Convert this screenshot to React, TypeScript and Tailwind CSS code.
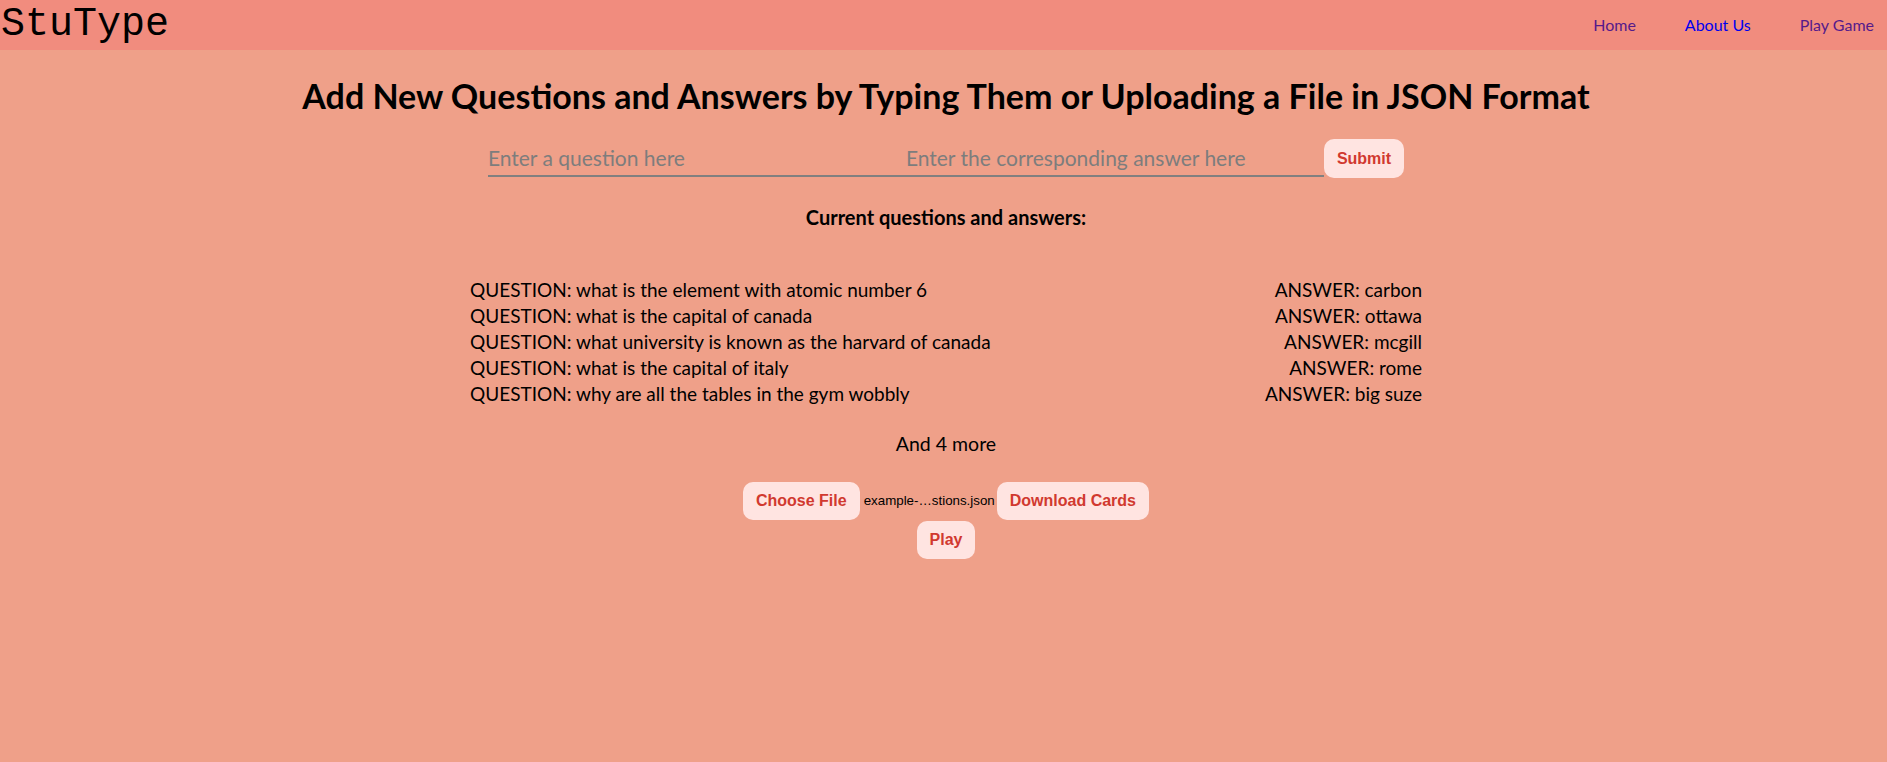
export default function App() {
  const qa: [string, string][] = [
    ["what is the element with atomic number 6", "carbon"],
    ["what is the capital of canada", "ottawa"],
    ["what university is known as the harvard of canada", "mcgill"],
    ["what is the capital of italy", "rome"],
    ["why are all the tables in the gym wobbly", "big suze"],
  ];
  const btn =
    "rounded-[10px] bg-[#ffe4e1] px-[13px] py-[10px] font-['Liberation_Sans',Arial,sans-serif] text-[16px] font-bold leading-[18px] text-[#d1392f]";
  return (
    <div className="min-h-screen bg-[#efa089] font-['Lato',sans-serif] text-black">
      <header className="flex h-[50px] items-center justify-between bg-[#f18c7e]">
        <div className="pl-[1px] font-['Liberation_Mono','Courier_New',monospace] text-[40px] leading-[50px] text-black">
          StuType
        </div>
        <nav className="flex gap-[49px] pr-[13px] text-[16px] leading-[50px]">
          <a className="text-[#551a8b]">Home</a>
          <a className="text-[#0000ee]">About Us</a>
          <a className="text-[#551a8b]">Play Game</a>
        </nav>
      </header>

      <main className="flex flex-col items-center pl-[5px]">
        <h1 className="mt-[26px] text-[34px] font-bold leading-[39px]">
          Add New Questions and Answers by Typing Them or Uploading a File in JSON Format
        </h1>

        <div className="mt-[24px] flex items-start">
          <input
            className="h-[38px] w-[418px] border-b-2 border-[#808080] bg-transparent text-[21px] outline-none placeholder:text-[#7d7d7d]"
            placeholder="Enter a question here"
          />
          <input
            className="h-[38px] w-[418px] border-b-2 border-[#808080] bg-transparent text-[21px] outline-none placeholder:text-[#7d7d7d]"
            placeholder="Enter the corresponding answer here"
          />
          <button className={btn + " h-[39px]"}>Submit</button>
        </div>

        <h3 className="mt-[27px] text-[20px] font-bold leading-[24px]">
          Current questions and answers:
        </h3>

        <div className="mt-[48px] flex w-[952px] flex-col text-[19px] leading-[26px]">
          {qa.map(([q, a]) => (
            <div key={q} className="flex justify-between">
              <span>QUESTION: {q}</span>
              <span>ANSWER: {a}</span>
            </div>
          ))}
        </div>

        <p className="mt-[24px] text-[19.5px] leading-[26px]">And 4 more</p>

        <div className="mt-[25px] flex flex-col items-center">
          <div className="flex items-center">
            <button className={btn}>Choose File</button>
            <span className="ml-[4px] font-['Liberation_Sans',Arial,sans-serif] text-[13.33px] text-black">
              example-…stions.json
            </span>
            <button className={btn + " ml-[2px]"}>Download Cards</button>
          </div>
          <button className={btn + " mt-[1px]"}>Play</button>
        </div>
      </main>
    </div>
  );
}
